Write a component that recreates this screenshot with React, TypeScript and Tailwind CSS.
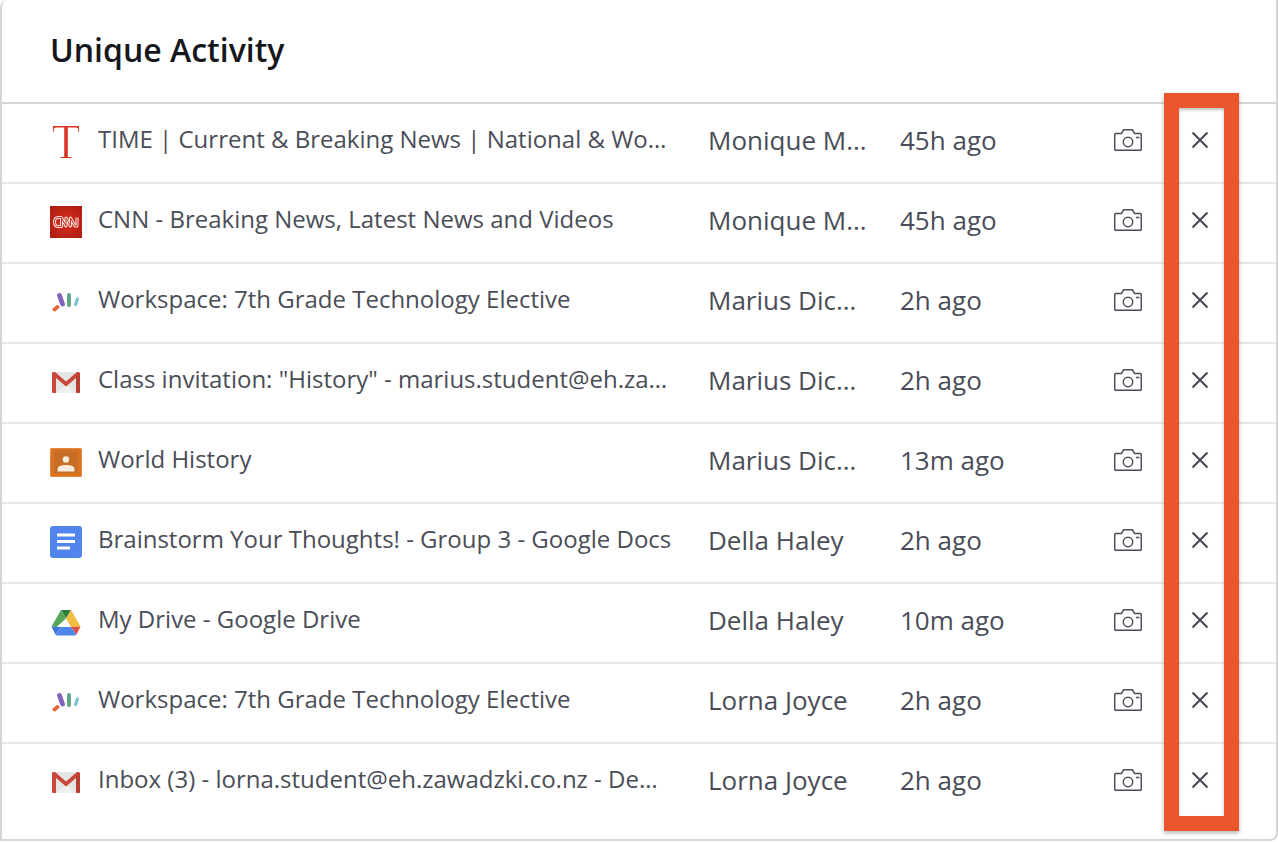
import { ReactNode } from "react";

const TimeIcon = () => (
  <svg width="26" height="32" viewBox="0 0 26 32">
    <path d="M0 0h26v6h-.8V3.500Q25.200 1.400 23 1.400H14.800V31h3.700v1h-11v-1h3.700V1.400H3Q.8 1.400.8 3.500V6H0z" fill="#dc3522" />
  </svg>
);

const CnnIcon = () => (
  <svg width="32" height="32" viewBox="0 0 32 32">
    <defs>
      <radialGradient id="cnnbg" cx="50%" cy="50%" r="65%">
        <stop offset="0%" stopColor="#d9301f" />
        <stop offset="100%" stopColor="#ad1c12" />
      </radialGradient>
    </defs>
    <rect width="32" height="32" fill="url(#cnnbg)" />
    <g fill="none" strokeLinejoin="round">
      <path d="M12 11.500H8.500Q4.500 11.500 4.500 16t4 4.500H11.500V12l4.500 8V12l4.500 8V12l4.500 8h2V11.500" stroke="#f6e2de" strokeWidth="3" />
      <path d="M12 11.500H8.500Q4.500 11.500 4.500 16t4 4.500H11.500V12l4.500 8V12l4.500 8V12l4.500 8h2V11.500" stroke="#cf2c1d" strokeWidth="1" />
    </g>
  </svg>
);

const WorkspaceIcon = () => (
  <svg width="28" height="20" viewBox="0 0 28 20">
    <path d="M2.500 17.500 5.500 15" stroke="#e8663e" strokeWidth="3.800" strokeLinecap="round" />
    <path d="M7.500 3.500 10.500 12" stroke="#8065b8" strokeWidth="4.800" strokeLinecap="round" />
    <path d="M17 3v10" stroke="#5fa58a" strokeWidth="4" strokeLinecap="round" />
    <path d="M25.500 7 23.500 12.500" stroke="#7cc2cf" strokeWidth="3.200" strokeLinecap="round" />
  </svg>
);

const GmailIcon = () => (
  <svg width="28" height="21" viewBox="0 0 28 21">
    <rect x="0" y="0" width="28" height="21" rx="1.500" fill="#e3e5e3" />
    <path d="M4 21 14 12l10 9z" fill="#eeeeec" />
    <path d="M0 1.500Q0 0 1.500 0H3l11 9.500L25 0h1.500Q28 0 28 1.500V19.500Q28 21 26.500 21H24V6l-10 8.500L4 6V21H1.500Q0 21 0 19.500z" fill="#c9473a" />
    <path d="M26 0.500 28 2V19.500Q28 21 26.500 21H24V6z" fill="#b93f31" />
  </svg>
);

const ClassroomIcon = () => (
  <svg width="32" height="29" viewBox="0 0 32 29">
    <rect width="32" height="29" rx="1.500" fill="#e08a45" />
    <rect x="1" y="1" width="30" height="27" fill="#d9731f" />
    <rect x="4" y="3" width="24" height="22" fill="#c86d25" />
    <circle cx="16" cy="11.500" r="3.200" fill="#f8ecdc" />
    <path d="M7.500 23.500v-2.500Q7.500 17 16 17t8.500 4v2.500z" fill="#f8ecdc" />
  </svg>
);

const DocsIcon = () => (
  <svg width="32" height="32" viewBox="0 0 32 32">
    <rect width="32" height="32" rx="3" fill="#5185ed" />
    <path d="M7 7.500h18v3H7zM7 14h18v3H7zM7 20.500h13v3H7z" fill="#fff" />
  </svg>
);

const DriveIcon = () => (
  <svg width="30" height="27" viewBox="0 0 30 27">
    <path d="M10 1h10L15 9.500z" fill="#2f7d3c" />
    <path d="M10 1 0.500 17.500 5.500 18 15 9.500z" fill="#58a65c" />
    <path d="M20 1 29.500 17.500 20 18 15 9.500z" fill="#f2bd42" />
    <path d="M0.500 17.500 4.500 25.500 10 18z" fill="#3d74d6" />
    <path d="M29.500 17.500 25.500 25.500 20 18z" fill="#dc4f3e" />
    <path d="M10 18h10l5.500 7.500q-.5 1-2 1H6.500q-1.500 0-2-1z" fill="#4f86ec" />
  </svg>
);

const CameraIcon = () => (
  <svg width="28" height="22" viewBox="0 0 28 22" fill="none" stroke="#4a4d57" strokeWidth="1.500">
    <path d="M2 4.500H7.500L9.500 .8h9L20.500 4.500H26a1.300 1.300 0 0 1 1.300 1.300V20a1.300 1.300 0 0 1-1.300 1.300H2A1.300 1.300 0 0 1 .7 20V5.800A1.300 1.300 0 0 1 2 4.500z" strokeLinejoin="round" />
    <circle cx="14" cy="13" r="4.700" />
    <path d="M22 8.500h3.500" />
  </svg>
);

const CloseIcon = () => (
  <svg width="18" height="18" viewBox="0 0 18 18" fill="none" stroke="#4a4d57" strokeWidth="2.200">
    <path d="M1.500 1.500l15 15M16.500 1.500l-15 15" />
  </svg>
);

interface Row {
  icon: ReactNode;
  title: string;
  user: string;
  time: string;
}

const rows: Row[] = [
  { icon: <TimeIcon />, title: "TIME | Current & Breaking News | National & World Updates", user: "Monique Mitchell", time: "45h ago" },
  { icon: <CnnIcon />, title: "CNN - Breaking News, Latest News and Videos", user: "Monique Mitchell", time: "45h ago" },
  { icon: <WorkspaceIcon />, title: "Workspace: 7th Grade Technology Elective", user: "Marius Dickens", time: "2h ago" },
  { icon: <GmailIcon />, title: 'Class invitation: "History" - marius.student@eh.zawadzki.co.nz', user: "Marius Dickens", time: "2h ago" },
  { icon: <ClassroomIcon />, title: "World History", user: "Marius Dickens", time: "13m ago" },
  { icon: <DocsIcon />, title: "Brainstorm Your Thoughts! - Group 3 - Google Docs", user: "Della Haley", time: "2h ago" },
  { icon: <DriveIcon />, title: "My Drive - Google Drive", user: "Della Haley", time: "10m ago" },
  { icon: <WorkspaceIcon />, title: "Workspace: 7th Grade Technology Elective", user: "Lorna Joyce", time: "2h ago" },
  { icon: <GmailIcon />, title: "Inbox (3) - lorna.student@eh.zawadzki.co.nz - Demo Mail", user: "Lorna Joyce", time: "2h ago" },
];

export default function App() {
  return (
    <div className="relative h-[842px] w-[1278px] overflow-hidden bg-white font-['Open_Sans',sans-serif]">
      <div className="h-[841px] rounded-br-lg rounded-tl-lg border-b-2 border-l-2 border-r-2 border-[#d6d6d6]">
        {/* HEADER */}
        <div className="flex h-[104px] items-center border-b-2 border-[#d6d6d6] pb-[2px] pl-[48px]">
          <h2 className="text-[32px] font-semibold text-[#15171c]">Unique Activity</h2>
        </div>

        {/* ROWS */}
        {rows.map((row, i) => (
          <div
            key={i}
            className={`flex h-20 items-center border-b-2 pb-1 text-[26px] text-[#4a4d57] ${i < rows.length - 1 ? "border-[#e8e8e8]" : "border-transparent"}`}
          >
            <div className="flex w-[96px] shrink-0 justify-center pl-[32px] pt-[2px]">{row.icon}</div>
            <div className="w-[578px] shrink-0 truncate pb-1 pr-1 text-[24px]">{row.title}</div>
            <div className="ml-[32px] w-[160px] shrink-0 truncate pb-[2px]">{row.user}</div>
            <div className="ml-[32px] w-[214px] shrink-0 pb-[2px]">{row.time}</div>
            <div className="pb-[2px]">
              <CameraIcon />
            </div>
            <div className="ml-[49px] pb-[2px]">
              <CloseIcon />
            </div>
          </div>
        ))}
      </div>

      {/* orange highlight */}
      <div className="absolute left-[1164px] top-[93px] h-[738px] w-[75px] border-[15px] border-[#eb562c] shadow-[0_2px_4px_rgba(0,0,0,0.3),inset_0_2px_3px_rgba(0,0,0,0.25)]" />
    </div>
  );
}
